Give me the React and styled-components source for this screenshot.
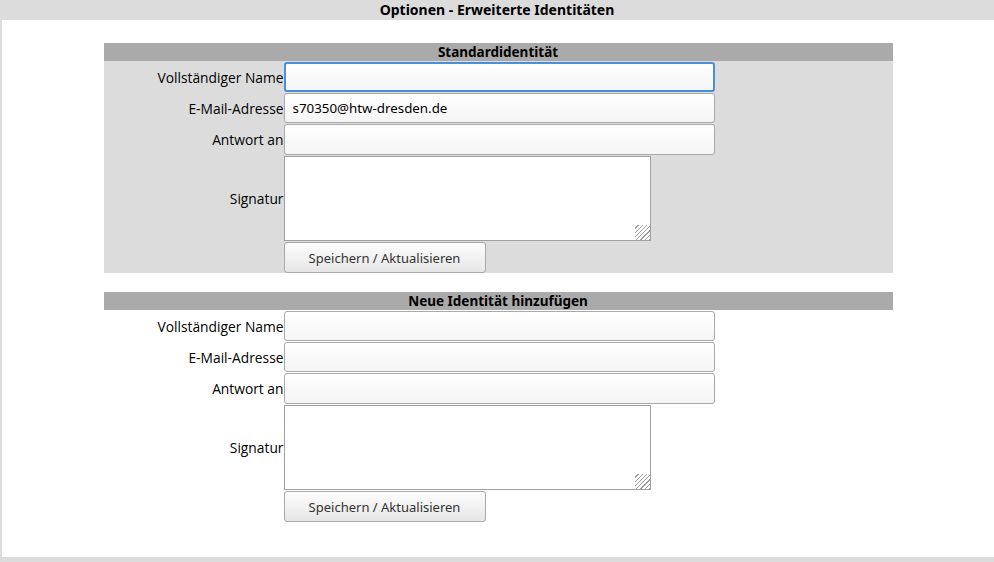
import React from 'react';
import styled, { createGlobalStyle } from 'styled-components';

const GlobalStyle = createGlobalStyle`
  html, body {
    margin: 0;
    padding: 0;
    background: #dcdcdc;
  }
  body {
    font-family: 'Noto Sans', 'Open Sans', sans-serif;
    color: #000;
  }
`

const Frame = styled.div`
  width: 994px;
  height: 562px;
  box-sizing: border-box;
  background: #dcdcdc;
  padding: 0 0 5px 2px;
  display: flex;
  flex-direction: column;
`

const TitleBar = styled.div`
  height: 20px;
  line-height: 20px;
  text-align: center;
  font-size: 14px;
  font-weight: bold;
  margin-left: -2px;
`

const Content = styled.div`
  flex: 1;
  background: #fff;
  padding-top: 23px;
  display: flex;
  flex-direction: column;
  align-items: center;
  gap: 19px;
`

const Section = styled.div`
  width: 789px;
  background: ${(props) => (props.shaded ? '#dcdcdc' : '#fff')};
  display: grid;
  grid-template-columns: 180px 1fr;
  row-gap: 1px;
  padding-bottom: ${(props) => (props.shaded ? '0' : '1px')};
`

const SectionHeader = styled.div`
  grid-column: 1 / -1;
  height: 18px;
  line-height: 18px;
  background: #aaaaaa;
  text-align: center;
  font-size: 13.5px;
  font-weight: bold;
`

const Label = styled.label`
  display: flex;
  align-items: center;
  justify-content: flex-end;
  font-family: 'Open Sans', 'Noto Sans', sans-serif;
  font-size: 13.8px;
  white-space: nowrap;
`

const Input = styled.input`
  width: 431px;
  height: ${(props) => props.tall ? '31px' : '30px'};
  box-sizing: border-box;
  border: 1px solid #a9a9a9;
  border-radius: 3px;
  background: linear-gradient(#ffffff, #f5f5f5);
  padding: 0 8px;
  font-family: 'Noto Sans', 'Open Sans', sans-serif;
  font-size: 13.33px;
  color: #000;
  caret-color: #000;
  outline: none;
  margin: 0;

  &.active {
    border: 2px solid #4a90d9;
    padding: 0 7px;
  }
`

const TextArea = styled.textarea`
  width: 367px;
  height: 85px;
  box-sizing: border-box;
  border: 1px solid #a0a0a0;
  background: #fff;
  margin: 0;
  resize: both;
  font-family: 'Noto Sans', 'Open Sans', sans-serif;
  font-size: 13.33px;
  display: block;

  &::-webkit-resizer {
    background: repeating-linear-gradient(
      135deg,
      transparent 0 2px,
      #a0a0a0 2px 3px
    );
    clip-path: polygon(100% 0, 100% 100%, 0 100%);
  }
`

const Button = styled.button`
  width: 202px;
  height: 31px;
  box-sizing: border-box;
  border: 1px solid #a9a9a9;
  border-radius: 3px;
  background: linear-gradient(#fdfdfd, #e6e6e6);
  font-family: 'Noto Sans', 'Open Sans', sans-serif;
  font-size: 13px;
  color: #333;
  margin: 0;
  padding: 0;
`

const Cell = styled.div`
  display: flex;
  align-items: center;
`

const IdentityForm = ({ title, shaded, email, focused }) => (
  <Section shaded={shaded}>
    <SectionHeader>{title}</SectionHeader>
    <Label>Vollständiger Name</Label>
    <Cell>
      <Input className={focused ? 'active' : ''} autoFocus={focused} defaultValue="" />
    </Cell>
    <Label>E-Mail-Adresse</Label>
    <Cell>
      <Input defaultValue={email} />
    </Cell>
    <Label>Antwort an</Label>
    <Cell>
      <Input tall defaultValue="" />
    </Cell>
    <Label>Signatur</Label>
    <Cell>
      <TextArea />
    </Cell>
    <div />
    <Cell>
      <Button>Speichern / Aktualisieren</Button>
    </Cell>
  </Section>
)

export default function App() {
  return (
    <>
      <GlobalStyle />
      <Frame>
        <TitleBar>Optionen - Erweiterte Identitäten</TitleBar>
        <Content>
          <IdentityForm title="Standardidentität" shaded email="s70350@htw-dresden.de" focused />
          <IdentityForm title="Neue Identität hinzufügen" email="" />
        </Content>
      </Frame>
    </>
  )
}
